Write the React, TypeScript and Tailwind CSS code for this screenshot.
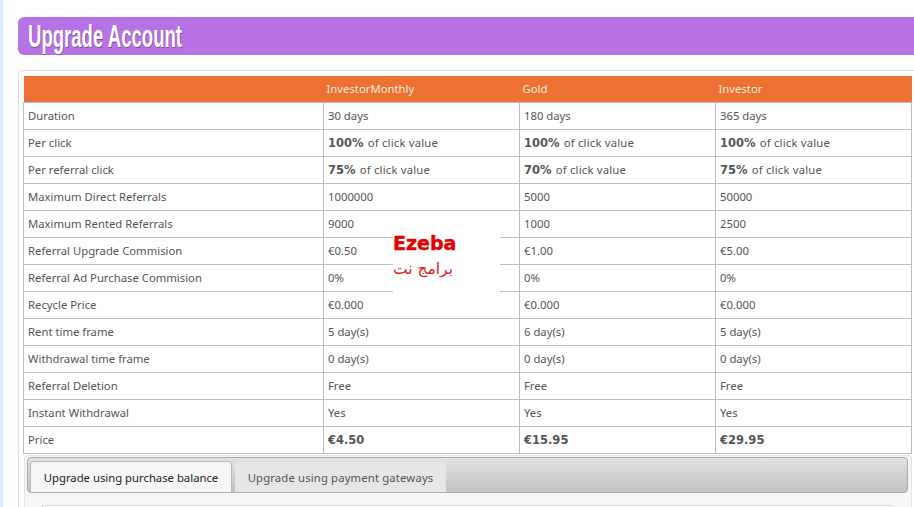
const rows: [string, string, string, string][] = [
  ["Duration", "30 days", "180 days", "365 days"],
  ["Per click", "100%| of click value", "100%| of click value", "100%| of click value"],
  ["Per referral click", "75%| of click value", "70%| of click value", "75%| of click value"],
  ["Maximum Direct Referrals", "1000000", "5000", "50000"],
  ["Maximum Rented Referrals", "9000", "1000", "2500"],
  ["Referral Upgrade Commision", "€0.50", "€1.00", "€5.00"],
  ["Referral Ad Purchase Commision", "0%", "0%", "0%"],
  ["Recycle Price", "€0.000", "€0.000", "€0.000"],
  ["Rent time frame", "5 day(s)", "6 day(s)", "5 day(s)"],
  ["Withdrawal time frame", "0 day(s)", "0 day(s)", "0 day(s)"],
  ["Referral Deletion", "Free", "Free", "Free"],
  ["Instant Withdrawal", "Yes", "Yes", "Yes"],
  ["Price", "€4.50|", "€15.95|", "€29.95|"],
];

function Val({ v }: { v: string }) {
  if (!v.includes("|")) return <>{v}</>;
  const [b, rest] = v.split("|");
  return (
    <>
      <b className="font-['DejaVu_Sans',sans-serif] text-[11.5px] font-bold leading-none">{b}</b>
      <span className="ml-[1px] tracking-[0.2px]">{rest}</span>
    </>
  );
}

export default function App() {
  return (
    <div className="relative h-[507px] w-[914px] overflow-hidden bg-white font-['Noto_Sans',sans-serif] text-[11.3px] text-[#555]">
      <div className="flex h-full">
        <div className="w-[3px] shrink-0 bg-[#d3f0fb]" />
        <div className="min-w-0 flex-1 pl-[15px] pt-[17px]">
          <div className="flex h-[38px] items-center rounded-l-[6px] bg-[#b772e6] pl-[10px]">
            <h1 className="origin-left scale-x-[0.58] whitespace-nowrap font-['Liberation_Sans',sans-serif] text-[32px] font-bold leading-none text-white [text-shadow:1px_1px_1px_#7a4a9a]">
              Upgrade Account
            </h1>
          </div>
          <div className="mt-[15px] h-[500px] rounded-tl-[5px] border-l border-t border-[#e2dcd2] pl-[5px] pt-[5px]">
            <table className="-ml-px w-[888px] table-fixed border-collapse">
              <colgroup>
                <col className="w-[300px]" />
                <col className="w-[196px]" />
                <col className="w-[196px]" />
                <col className="w-[196px]" />
              </colgroup>
              <thead>
                <tr className="h-[26px] bg-[#ec7133] text-left text-[#ffe9dc]">
                  <th />
                  <th className="pl-[3px] pt-[1px] font-normal">InvestorMonthly</th>
                  <th className="pl-[3px] pt-[1px] font-normal">Gold</th>
                  <th className="pl-[3px] pt-[1px] font-normal">Investor</th>
                </tr>
              </thead>
              <tbody>
                {rows.map((r) => (
                  <tr key={r[0]} className="h-[27px]">
                    <td className="border border-[#bdbdbd] pl-[4px] pt-[1px]">{r[0]}</td>
                    {r.slice(1).map((c, i) => (
                      <td key={i} className="border border-[#bdbdbd] pl-[4px] pt-[1px]">
                        <Val v={c} />
                      </td>
                    ))}
                  </tr>
                ))}
              </tbody>
            </table>
            <div className="mt-[1px] h-[60px] w-[888px] rounded-t-[4px] border-x border-t border-[#e4e4e4] bg-[#f6f6f6] pl-[1px] pr-[3px] pt-[1px]">
              <div className="ml-[1px] flex h-[36px] items-end rounded-[4px] border border-[#aaa] bg-gradient-to-b from-[#e3e3e3] to-[#c2c2c2] pl-[2px]">
                <div className="flex h-[31px] w-[202px] items-center justify-center rounded-t-[4px] border border-b-0 border-[#bbb] bg-[#f6f6f6] pt-[3px] text-[#222]">
                  Upgrade using purchase balance
                </div>
                <div className="ml-[3px] flex h-[30px] w-[211px] items-center justify-center rounded-t-[2px] bg-[#e6e6e6] pt-[3px] tracking-[0.15px] text-[#555]">
                  Upgrade using payment gateways
                </div>
              </div>
              <div className="ml-[16px] mt-[12px] h-[12px] w-[850px] border-l border-t border-[#ddd] bg-white" />
            </div>
          </div>
        </div>
      </div>
      <div className="absolute left-[393px] top-[232px] flex h-[60px] w-[107px] flex-col bg-white">
        <span className="font-['DejaVu_Sans',sans-serif] text-[19px] font-bold leading-[22px] text-[#e60000] [-webkit-text-stroke:0.4px_#e60000]">
          Ezeba
        </span>
        <span className="mt-[5px] w-[60px] whitespace-nowrap text-center font-['DejaVu_Sans',sans-serif] text-[15.5px] leading-[20px] text-[#e02020]" dir="rtl">
          برامج نت
        </span>
      </div>
    </div>
  );
}
